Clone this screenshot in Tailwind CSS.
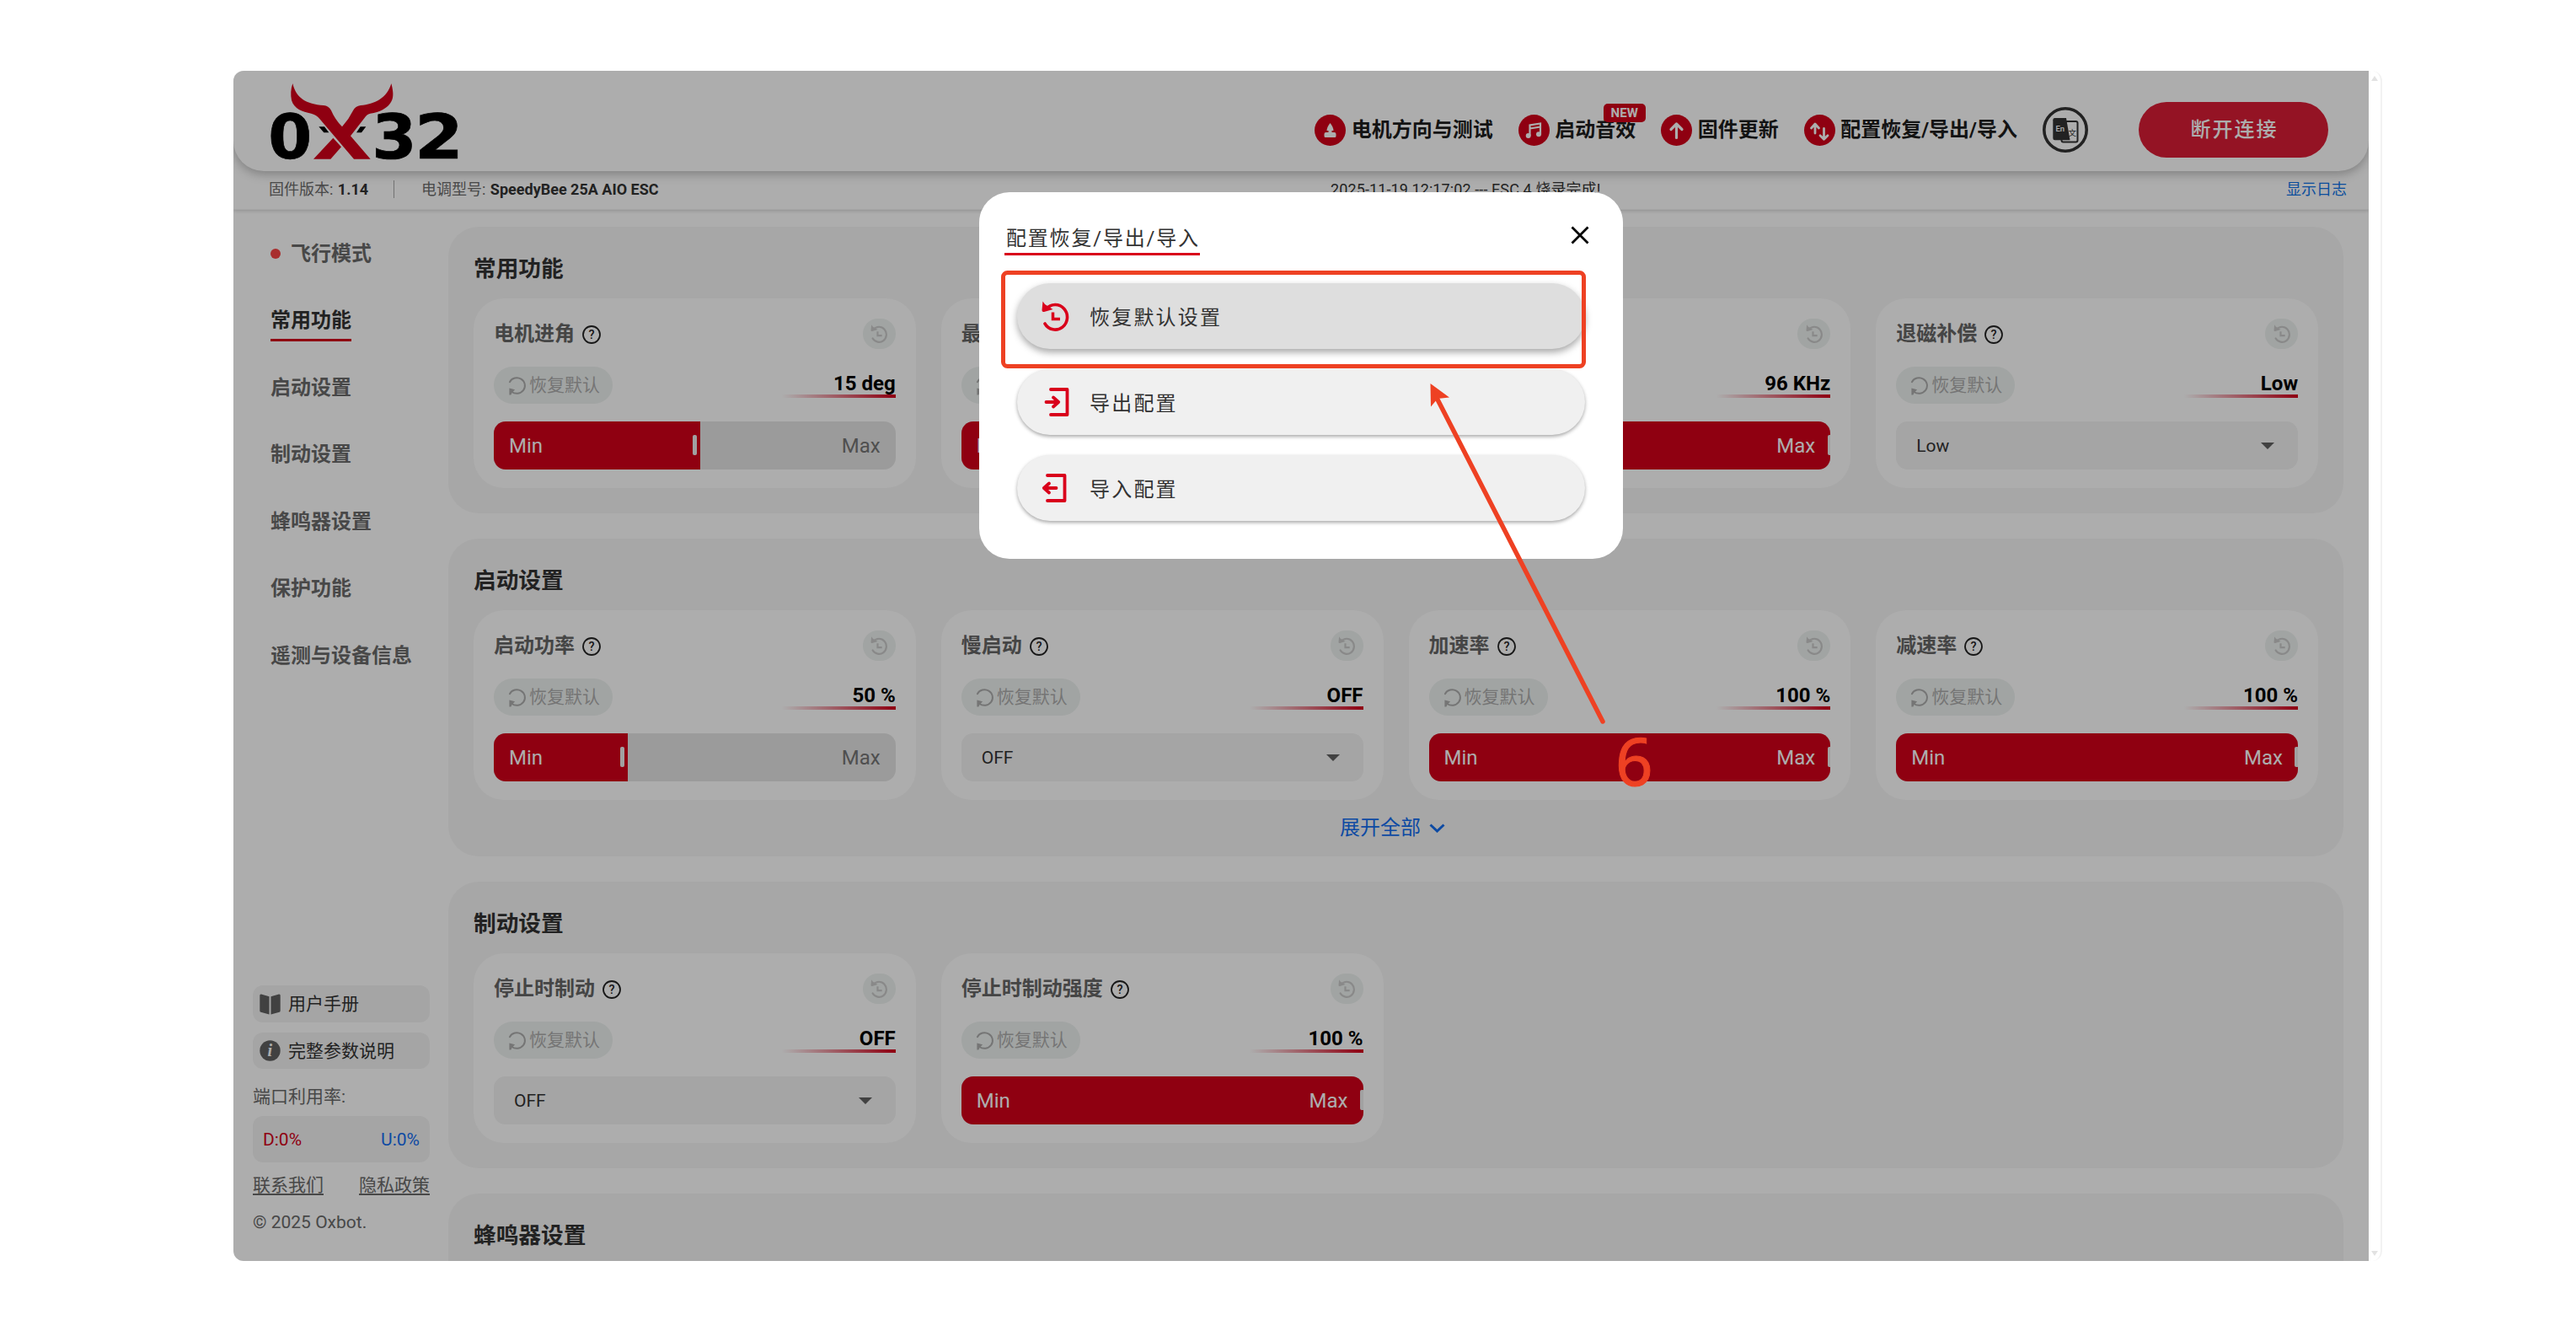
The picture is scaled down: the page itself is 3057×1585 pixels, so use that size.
<!DOCTYPE html>
<html lang="zh-CN">
  <head>
    <meta charset="UTF-8" />
    <meta name="viewport" content="width=device-width, initial-scale=1.0" />
    <title>OX32</title>
    <script src="https://cdn.jsdelivr.net/npm/@tailwindcss/browser@4"></script>
  </head>

  <body class="h-[1585px] overflow-hidden bg-white pt-[84px] pl-[277px] font-['Roboto','Noto_Sans_CJK_SC',sans-serif] text-2xl text-[#333]">
    <!-- shared icons -->
    <svg class="hidden">
      <symbol id="i-history" viewBox="-18 -18 36 36">
        <path d="M-10.5-8.5A14.3 14.8 0 1 1-12 9" fill="none" stroke="currentColor" stroke-width="3.6" stroke-linecap="round" />
        <path d="M-14.5-17.5l2.5 3.5 9.5 6-10.5 3q-2.500.5-2.500-2z" fill="currentColor" />
        <path d="M-2.500-4.500V3.500H6" fill="none" stroke="currentColor" stroke-width="3.500" />
      </symbol>
      <symbol id="i-restore" viewBox="-12 -12 24 24">
        <path d="M-9-4.500A10 9.700 0 1 1-6.500 7.500" fill="none" stroke="currentColor" stroke-width="2" stroke-linecap="round" />
        <path d="M-9.500 3l7 2-3.500 3.500-1.500 3h-2z" fill="currentColor" />
      </symbol>
      <symbol id="i-help" viewBox="0 0 22 22">
        <circle cx="11" cy="11" r="10" fill="none" stroke="currentColor" stroke-width="1.800" />
        <text x="11" y="16.200" font-size="14.500" font-weight="500" text-anchor="middle" fill="currentColor">?</text>
      </symbol>
    </svg>

    <div class="flex h-[1412px] w-[2550px]">
      <div class="relative flex w-[2534px] flex-col overflow-hidden rounded-l-xl bg-white">
        <header class="relative z-10 flex h-[119px] shrink-0 items-center justify-between rounded-b-[36px] bg-white pr-12 pl-[33px] shadow-[0_4px_12px_rgba(0,0,0,0.25)]">
          <svg class="h-[105px] w-[250px] overflow-visible" viewBox="0 0 750 315">
            <g font-family="DejaVu Sans" font-weight="700" font-size="219" fill="#000" stroke="#000" stroke-width="2">
              <text x="25" y="291" textLength="156" lengthAdjust="spacingAndGlyphs">0</text>
              <text x="394" y="291" textLength="160" lengthAdjust="spacingAndGlyphs">3</text>
              <text x="546" y="291" textLength="174" lengthAdjust="spacingAndGlyphs">2</text>
            </g>
            <path d="M205 178h20l16 21h-18zM353 178h20l-16 21h-18z" fill="#000" />
            <path d="M112 24C124 76 160 98 222 102Q240 103 249 120Q263 153 288 178Q312 151 326 122Q335 104 354 102C404 98 448 76 463 24C474 66 474 94 432 118Q414 128 388 131Q374 135 367 148L318 211L389 293H330L208 150Q196 135 178 131C146 124 118 116 108 84Q102 52 112 24Z" fill="#d3001a" />
            <path d="M256 218l29 32-38 43h-61z" fill="#d3001a" />
          </svg>

          <div class="flex items-center pt-[21px] font-bold text-[#1c1c1c]">
            <div class="flex items-center gap-[6.500px]">
              <svg class="size-[37px]" viewBox="-18.500 -18.500 37 37">
                <circle r="18.500" fill="#d3001a" />
                <path d="M0-8.500C2-6 4-3 4 .5H2v2h3q2 0 2 2v2.500q0 1.500-1.500 1.500h-11Q-7 8.500-7 7V4.500q0-2 2-2h3v-2h-2C-4-3-2-6 0-8.500z" fill="#fff" />
              </svg>
              <span>电机方向与测试</span>
            </div>
            <div class="relative ml-[30px] flex items-center gap-[6.500px]">
              <svg class="size-[37px]" viewBox="-18.500 -18.500 37 37">
                <circle r="18.500" fill="#d3001a" />
                <path d="M-5 6.500V-6L7.500-8V4.500M-5-2L7.500-4" fill="none" stroke="#fff" stroke-width="2.200" />
                <circle cx="-6.800" cy="6.500" r="3" fill="#fff" />
                <circle cx="5.500" cy="4.800" r="3" fill="#fff" />
              </svg>
              <span>启动音效</span>
              <span class="absolute -top-[13px] left-[101px] h-[22px] w-[50px] rounded-[5px] bg-[#d3001a] text-center text-[15px] leading-[22px] text-white">NEW</span>
            </div>
            <div class="ml-[30px] flex items-center gap-[6.500px]">
              <svg class="size-[37px]" viewBox="-18.500 -18.500 37 37">
                <circle r="18.500" fill="#d3001a" />
                <path d="M0 9V-7M-6.500-1L0-7.500 6.500-1" fill="none" stroke="#fff" stroke-width="3.200" stroke-linecap="round" stroke-linejoin="round" />
              </svg>
              <span>固件更新</span>
            </div>
            <div class="ml-[30px] flex items-center gap-[6.500px]">
              <svg class="size-[37px]" viewBox="-18.500 -18.500 37 37">
                <circle r="18.500" fill="#d3001a" />
                <path d="M-5.500 3.500V-7M-10-2.500L-5.500-7.500-1-2.500M5-2V10M.5 6.200L5 10.800 9.500 6.200" fill="none" stroke="#fff" stroke-width="2.800" stroke-linecap="round" stroke-linejoin="round" />
              </svg>
              <span>配置恢复/导出/导入</span>
            </div>
            <svg class="ml-[30px] size-[54px]" viewBox="-27 -27 54 54">
              <circle r="25.200" fill="#fff" stroke="#333" stroke-width="3.600" />
              <rect x="-4.500" y="-10" width="19" height="24.500" rx="2" fill="#fff" stroke="#333" stroke-width="2" />
              <path d="M-12.500-14H1L5.500 12.300H-12.500q-2.200 0-2.200-2.200V-11.800q0-2.200 2.200-2.200z" fill="#333" />
              <text x="-11.500" y="2" font-size="9.500" font-weight="500" fill="#fff">En</text>
              <text x="3.500" y="7" font-size="9.500" font-weight="400" fill="#333">文</text>
            </svg>
            <button class="ml-[60px] h-[66px] w-[225px] rounded-full bg-[#db1d35] pl-[2px] font-medium tracking-[2px] text-white">断开连接</button>
          </div>
        </header>

        <div class="-mt-9 flex h-[82px] shrink-0 items-center border-b border-[#f4f4f4] bg-white px-[42px] pt-[34px] text-lg shadow-[0_1px_4px_rgba(0,0,0,0.18)]">
          <p class="text-[#6c6c6c]">固件版本: <span class="ml-px font-bold text-[#333]">1.14</span></p>
          <div class="mr-8 ml-[30px] h-[21px] w-px bg-[#aaa]"></div>
          <p class="w-[1079px] text-[#6c6c6c]">电调型号: <span class="ml-px font-bold text-[#333]">SpeedyBee 25A AIO ESC</span></p>
          <p class="tracking-[0.100px]">2025-11-19 12:17:02 --- ESC 4 烧录完成!</p>
          <a class="mr-[-16px] ml-auto text-[#0f73e8]">显示日志</a>
        </div>

        <div class="flex min-h-0 flex-1">
          <aside class="flex w-[255px] shrink-0 flex-col justify-between pt-3 pb-[31px]">
            <nav class="flex flex-col pl-[44px] font-bold text-[#6a6a6a]">
              <a class="flex h-[79.500px] items-center gap-3"><i class="size-3 rounded-full bg-[#f84444]"></i>飞行模式</a>
              <a class="flex h-[79.500px] items-center"><span class="border-b-3 border-[#d3001a] pt-[2px] leading-[44px] text-[#333]">常用功能</span></a>
              <a class="flex h-[79.500px] items-center">启动设置</a>
              <a class="flex h-[79.500px] items-center">制动设置</a>
              <a class="flex h-[79.500px] items-center">蜂鸣器设置</a>
              <a class="flex h-[79.500px] items-center">保护功能</a>
              <a class="flex h-[79.500px] items-center">遥测与设备信息</a>
            </nav>

            <div class="ml-[23px] w-[210px] text-[21px] leading-[30px] text-[#6a6a6a]">
              <a class="flex h-[44px] items-center gap-[9px] rounded-xl bg-[#f4f4f4] pl-2 text-[#333]">
                <svg class="size-[25px]" viewBox="0 0 25 25" fill="#616161">
                  <path d="M2 .5l9.500 2.700V24.500L1.500 21.800Q.3 21.500.3 20V2Q.3.2 2 .5zM23 .5l-9.500 2.700V24.500l10-2.700q1.200-.3 1.200-1.800V2Q24.700.2 23 .5z" />
                </svg>
                用户手册
              </a>
              <a class="mt-3 flex h-[43px] items-center gap-[9px] rounded-xl bg-[#f4f4f4] pl-2 text-[#333]">
                <svg class="size-[25px]" viewBox="0 0 25 25">
                  <circle cx="12.500" cy="12.500" r="12.200" fill="#616161" />
                  <text x="12.200" y="18.800" font-family="Liberation Serif" font-style="italic" font-weight="700" font-size="20" text-anchor="middle" fill="#fff">i</text>
                </svg>
                完整参数说明
              </a>
              <p class="mt-[18px]">端口利用率:</p>
              <div class="mt-2 flex h-[55px] items-center justify-between rounded-xl bg-[#f4f4f4] px-3">
                <span class="text-[#d3001a]">D:0%</span><span class="text-[#146ef0]">U:0%</span>
              </div>
              <p class="mt-3 flex justify-between underline underline-offset-[3px]"><a>联系我们</a><a>隐私政策</a></p>
              <p class="mt-[14px]">© 2025 Oxbot.</p>
            </div>
          </aside>

          <main id="main" class="flex w-[2249px] flex-col gap-[30px] pt-5"></main>
        </div>

        <!-- dialog -->
        <div class="absolute inset-0 z-20 bg-black/32"></div>
        <div class="absolute top-[144px] left-[885px] z-30 h-[435px] w-[764px] rounded-[36px] bg-white pt-[38px] pr-[40px] pl-[30px]">
          <div class="flex items-start justify-between">
            <h2 class="border-b-3 border-[#d9001b] pl-0.5 leading-[34px] tracking-[1.800px]">配置恢复/导出/导入</h2>
            <svg class="mt-[2px] size-[22px]" viewBox="0 0 22 22" stroke="#000" stroke-width="2.800"><path d="M1.500 1.500l19 19M20.500 1.500l-19 19" /></svg>
          </div>
          <div class="mt-[33px] ml-[15px] flex w-[674px] flex-col gap-6 tracking-[2.200px]">
            <button class="flex h-[78px] items-center gap-[23px] rounded-[39px] bg-[#dedede] pl-[27px] shadow-[0_4px_8px_rgba(0,0,0,0.35)]">
              <svg class="size-9 text-[#d9001b]"><use href="#i-history" /></svg><span class="pt-1">恢复默认设置</span>
            </button>
            <button class="flex h-[78px] items-center gap-[23px] rounded-[39px] bg-[#f0f0f0] pl-[27px] shadow-[0_2px_4px_rgba(0,0,0,0.35)]">
              <svg class="size-9" viewBox="-18 -18 36 36" fill="none" stroke="#d9001b" stroke-width="3.800" stroke-linecap="round" stroke-linejoin="round">
                <path d="M-5-15H14.500V15H-5" /><path d="M-10.500 0H4M-2-5.500L4.200 0-2 5.500" />
              </svg><span class="pt-1">导出配置</span>
            </button>
            <button class="flex h-[78px] items-center gap-[23px] rounded-[39px] bg-[#f0f0f0] pl-[27px] shadow-[0_2px_4px_rgba(0,0,0,0.35)]">
              <svg class="size-9" viewBox="-18 -18 36 36" fill="none" stroke="#d9001b" stroke-width="3.800" stroke-linecap="round" stroke-linejoin="round">
                <path d="M-9-15H11.500V15H-9" /><path d="M1.500 0H-13M-7-5.500L-13.200 0-7 5.500" />
              </svg><span class="pt-1">导入配置</span>
            </button>
          </div>
        </div>

        <!-- annotation: frame, arrow and step number -->
        <svg class="absolute top-0 left-0 z-40 h-[1412px] w-[2534px]" viewBox="277 84 2534 1412">
          <rect x="1190.500" y="323.500" width="689" height="111" rx="5" fill="none" stroke="#ee4123" stroke-width="5" />
          <path d="M1902 856L1706 474" stroke="#ee4123" stroke-width="5.500" stroke-linecap="round" />
          <path d="M1697.500 455l22.500 16.500-14 1.500-8 9.500z" fill="#ee4123" />
          <text x="1917" y="932" font-family="Noto Sans" font-size="78" fill="#ee4123" stroke="#ee4123" stroke-width="1">6</text>
        </svg>
      </div>

      <div class="flex w-4 flex-col items-center justify-between rounded-r-xl border-r-2 border-[#f2f2f2] py-1.5">
        <svg class="w-2" viewBox="0 0 8 6" fill="#e2e2e2"><path d="M4 0l4 6H0z" /></svg>
        <svg class="w-2" viewBox="0 0 8 6" fill="#e2e2e2"><path d="M0 0h8L4 6z" /></svg>
      </div>
    </div>

    <script>
      const sections = [
        {
          title: "常用功能",
          items: [
            { name: "电机进角", value: "15 deg", fill: 245 },
            { name: "最低启动功率", value: "5 %", fill: 477 },
            { name: "PWM频率", value: "96 KHz", fill: 477 },
            { name: "退磁补偿", value: "Low", select: true },
          ],
        },
        {
          title: "启动设置",
          more: true,
          items: [
            { name: "启动功率", value: "50 %", fill: 159 },
            { name: "慢启动", value: "OFF", select: true },
            { name: "加速率", value: "100 %", fill: 477 },
            { name: "减速率", value: "100 %", fill: 477 },
          ],
        },
        {
          title: "制动设置",
          items: [
            { name: "停止时制动", value: "OFF", select: true },
            { name: "停止时制动强度", value: "100 %", fill: 477 },
          ],
        },
        { title: "蜂鸣器设置", items: [] },
      ];

      const select = (item) => `
        <div class="mt-[21px] flex h-[57px] items-center justify-between rounded-[14px] bg-[#f3f3f3] pr-[28px] pl-6 text-[21px]">
          ${item.value}
          <svg class="h-2 w-4" viewBox="0 0 16 8" fill="#616161"><path d="M0 0h16L8 8z" /></svg>
        </div>`;

      const slider = (item) => `
        <div class="relative mt-[21px] flex h-[57px] items-center justify-between overflow-hidden rounded-[14px] bg-[#e5e5e5] px-[18px]">
          <div class="absolute inset-y-0 left-0 bg-[#d3001a]" style="width: ${item.fill}px"></div>
          <div class="absolute top-4 h-6 w-[5px] rounded-[2px] bg-[#eee]" style="left: ${item.fill === 477 ? 473 : item.fill - 9}px"></div>
          <span class="relative text-white">Min</span>
          <span class="relative ${item.fill === 477 ? "text-white" : "text-[#757575]"}">Max</span>
        </div>`;

      const card = (item) => `
        <article class="h-[225px] rounded-[36px] bg-white px-6 pt-6">
          <div class="flex h-9 items-center">
            <h3 class="font-bold text-[#666]">${item.name}</h3>
            <svg class="mt-0.5 ml-[9px] size-[22px] text-[#222]"><use href="#i-help" /></svg>
            <span class="ml-auto flex h-9 w-[39px] items-center justify-center rounded-full bg-[#edf2f0] text-[#cacaca]">
              <svg class="size-[22px]"><use href="#i-history" /></svg>
            </span>
          </div>
          <div class="mt-[21px] flex h-[44px] items-center justify-between">
            <span class="flex h-[44px] w-[141px] items-center gap-[3px] rounded-full bg-[#edf2f0] pl-[16px] text-[21px] text-[#adadad]">
              <svg class="size-[23px]"><use href="#i-restore" /></svg>恢复默认
            </span>
            <span class="relative mb-[5px] font-bold text-black">
              <i class="absolute top-[29px] right-0 h-1 w-[135px] bg-linear-to-r from-[#d3001a]/0 to-[#d3001a]"></i>
              <span class="relative">${item.value}</span>
            </span>
          </div>
          ${item.select ? select(item) : slider(item)}
        </article>`;

      const main = document.querySelector("#main");
      main.innerHTML = sections
        .map(
          (s) => `
        <section class="shrink-0 rounded-[36px] bg-[#f7f7f7] px-[30px] pt-[30px] pb-[30px]">
          <h2 class="h-[55px] text-[26.700px] leading-[40px] font-bold">${s.title}</h2>
          <div class="grid min-h-[225px] grid-cols-4 gap-[30px]">${s.items.map(card).join("")}</div>
          ${
            s.more
              ? `<a class="-mb-[5px] flex h-[42px] items-center justify-center gap-[10px] pt-6 pr-[8px] text-[#146ef0]">展开全部
                  <svg class="h-[11px] w-[19px]" viewBox="0 0 19 11" fill="none" stroke="currentColor" stroke-width="3"><path d="M1.500 1.500l8 7.500 8-7.500" /></svg>
                </a>`
              : ""
          }
        </section>`
        )
        .join("");
    </script>
  </body>
</html>
